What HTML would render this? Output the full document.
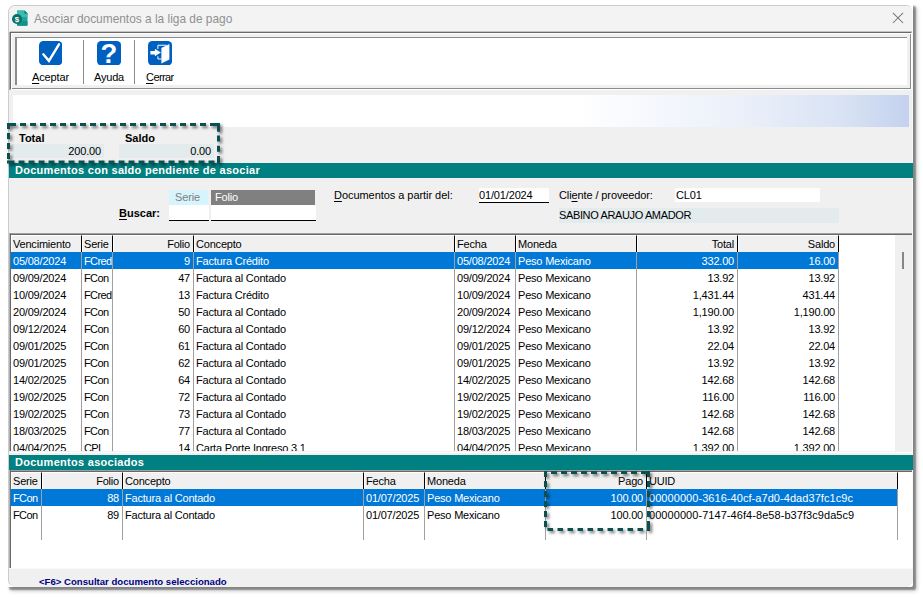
<!DOCTYPE html>
<html lang="es">
<head>
<meta charset="utf-8">
<title>Asociar documentos a la liga de pago</title>
<style>
*{box-sizing:border-box;margin:0;padding:0}
html,body{width:923px;height:597px;overflow:hidden;background:#fff}
body{font-family:"Liberation Sans",sans-serif;font-size:11px;color:#000;position:relative;letter-spacing:-0.15px}
.abs{position:absolute}
#shadow{position:absolute;left:6px;top:3px;width:907px;height:584px;border-radius:2px;box-shadow:3px 3px 1.5px rgba(0,0,0,.36),4px 4px 4px rgba(0,0,0,.2)}
#win{position:absolute;left:8px;top:5px;width:905px;height:582px;background:#f0f0f0;border:1px solid #c9cdd2;border-right-color:#f8f8f8;border-bottom-color:#f0f0f0;border-radius:7px;overflow:hidden}
#clip{position:absolute;left:0;top:0;width:923px;height:597px;clip-path:inset(6px 10px 11px 9px round 6px)}
#tbar{position:absolute;left:9px;top:6px;width:903px;height:26px;background:#f3f3f3}
#title{letter-spacing:0;position:absolute;left:34px;top:11px;font-size:11.9px;color:#909090;white-space:nowrap;line-height:16px}
u{text-decoration:underline;text-underline-offset:1.5px;text-decoration-thickness:1px}
.tb{position:absolute;top:71px;font-size:11px;line-height:13px;white-space:nowrap}
.bar{position:absolute;left:9px;width:904px;height:15px;background:#008080;color:#fff;font-weight:bold;font-size:11px;line-height:15px;padding-left:6px;white-space:nowrap;letter-spacing:.28px}
.lbl{position:absolute;white-space:nowrap;line-height:13px}
.b{font-weight:bold;letter-spacing:0}
.fld{position:absolute;background:#e3ebed;white-space:nowrap;line-height:14px;height:14px}
.grid{position:absolute;background:#fff;overflow:hidden;letter-spacing:-0.2px}
.hd{position:absolute;top:0;height:17px;background:#f0f0f0;border-right:1px solid #000;border-left:1px solid #fff;border-top:1px solid #fff;line-height:15px;padding:1px 3px 0 1px;white-space:nowrap;overflow:hidden}
.r{text-align:right}
.row{position:absolute;left:0;height:17px;line-height:17px;white-space:nowrap}
.row span{position:absolute;top:0;height:17px;padding:1px 3px 0 2px;overflow:hidden}
.sel{color:#fff}
.sel i{position:absolute;left:0;top:0;height:17px;background:#0078d7}
.dash{filter:drop-shadow(2px 2px 1.5px rgba(0,0,0,.55))}
.vl{position:absolute;width:1px;background:#a0a0a0;z-index:2}
</style>
</head>
<body>
<div id="shadow"></div>
<div id="win"></div>
<div id="clip">
<div id="tbar"></div>

<!-- title bar -->
<svg class="abs" style="left:11px;top:9px" width="18" height="18" viewBox="0 0 18 18">
  <path d="M6 1.5h7.5l3 3v11.5a.8.8 0 0 1-.8.8H6.800a.8.8 0 0 1-.8-.8z" fill="#19a59a"/>
  <path d="M6 1.500h7.500l3 3V8H6z" fill="#3bbcb0"/>
  <path d="M6 12h10.500v4a.8.8 0 0 1-.8.8H6.800a.8.8 0 0 1-.8-.8z" fill="#0f9488"/>
  <path d="M13.500 1.500l3 3h-3z" fill="#0b6f69"/>
  <circle cx="6" cy="10" r="5" fill="#0b6f69"/>
  <text x="6" y="13" font-family="Liberation Sans,sans-serif" font-size="8" font-weight="bold" fill="#fff" text-anchor="middle">$</text>
</svg>
<div id="title">Asociar documentos a la liga de pago</div>
<svg class="abs" style="left:892px;top:12px" width="12" height="12" viewBox="0 0 12 12"><path d="M.9 .8L11.100 11M11.100 .8L.9 11" stroke="#767676" stroke-width="1.050" fill="none"/></svg>

<!-- toolbar -->
<div class="abs" style="left:10px;top:32px;width:902px;height:58px;border-top:1px solid #696969;border-left:1px solid #696969;border-right:1px solid #fff;border-bottom:1px solid #fff;background:#f0f0f0;box-shadow:inset 1px 1px 0 #fff,inset -1px -1px 0 #8c8c8c,-1px 0 0 #a8a8a8,0 -1px 0 #c4c4c4"></div>
<div class="abs" style="left:15px;top:37px;width:892px;height:48px;border-top:1px solid #8c8c8c;border-left:2px solid #8c8c8c;background:#fff"></div>
<div class="abs" style="left:83px;top:40px;width:1px;height:44px;background:#8c8c8c"></div>
<div class="abs" style="left:134px;top:40px;width:1px;height:44px;background:#8c8c8c"></div>

<svg class="abs" style="left:38.800px;top:40.900px" width="23.400" height="24.300" viewBox="0 0 23.400 24.300"><rect width="23.400" height="24.300" rx="4.300" fill="#0060c0"/><path d="M4.300 13.300L9.900 19.900L20 3.300" stroke="#fff" stroke-width="2.400" fill="none" stroke-linecap="round" stroke-linejoin="miter"/></svg>
<svg class="abs" style="left:96.800px;top:40.900px" width="24.100" height="24.400" viewBox="0 0 24.100 24.400"><rect width="24.100" height="24.400" rx="4.300" fill="#0060c0"/><text x="11.900" y="22.200" font-family="Liberation Sans,sans-serif" font-size="27.500" font-weight="bold" fill="#fff" text-anchor="middle">?</text></svg>
<svg class="abs" style="left:147.800px;top:40.900px" width="24.100" height="24.400" viewBox="0 0 24.100 24.400"><rect width="24.100" height="24.400" rx="4.300" fill="#0060c0"/><path d="M13.400 7L21.400 2.950V18.500L13.400 22.500z" fill="#fff"/><path d="M9.900 8V4.250H18.500M9.900 15.300V18H13.400" stroke="#fff" stroke-width="1" fill="none"/><path d="M2.400 9.900H6.900V7.800L12.900 11.600L6.900 15.200V13.400H2.400z" fill="#fff"/></svg>

<div class="tb" style="left:32px;letter-spacing:-.13px"><u>A</u>ceptar</div>
<div class="tb" style="left:94px;letter-spacing:-.2px">Ayuda</div>
<div class="tb" style="left:146px;letter-spacing:-.58px"><u>C</u>errar</div>

<!-- gradient band -->
<div class="abs" style="left:13px;top:95px;width:896px;height:32px;background:linear-gradient(90deg,#fff 0%,#fff 63%,#f2f5fc 74.800%,#e8eef9 83.400%,#d9e3f4 92.300%,#c4d2ee 100%)"></div>

<!-- totals -->
<div class="lbl b" style="left:19px;top:132px">Total</div>
<div class="lbl b" style="left:125px;top:132px">Saldo</div>
<div class="fld r" style="left:12px;top:144px;width:92px;padding-right:3px">200.00</div>
<div class="fld r" style="left:119px;top:144px;width:95px;padding-right:3px">0.00</div>

<div class="bar" style="top:163px">Documentos con saldo pendiente de asociar</div>

<!-- dashed highlight 1 -->

<!-- search -->
<div class="abs" style="left:169px;top:190px;width:39px;height:15px;background:#d6f4fb;color:#808080;line-height:15px;padding-left:6px">Serie</div>
<div class="abs" style="left:211px;top:190px;width:104px;height:15px;background:#808080;color:#fff;line-height:15px;padding-left:4px">Folio</div>
<div class="lbl b" style="left:119px;top:207px"><u>B</u>uscar:</div>
<div class="abs" style="left:169px;top:205px;width:40px;height:16px;background:#fff;border-bottom:1px solid #000"></div>
<div class="abs" style="left:211px;top:205px;width:105px;height:16px;background:#fff;border-bottom:1px solid #000"></div>

<div class="lbl" style="left:334px;top:189px;letter-spacing:-.05px"><u>D</u>ocumentos a partir del:</div>
<div class="abs" style="left:479px;top:188px;width:70px;height:15px;background:#fff;border-bottom:1px solid #000;line-height:15px;padding-left:0">01/01/2024</div>
<div class="lbl" style="left:559px;top:189px;letter-spacing:-.11px">Cli<u>e</u>nte / proveedor:</div>
<div class="abs" style="left:675px;top:188px;width:145px;height:14px;background:#fff;line-height:15px;padding-left:1px">CL01</div>
<div class="fld" style="left:559px;top:208px;width:280px;height:15px;line-height:15px;letter-spacing:-.37px">SABINO ARAUJO AMADOR</div>

<!-- grid 1 -->
<div class="abs" style="left:10px;top:233px;width:902px;height:218px;border-top:1px solid #a0a0a0;border-left:1px solid #696969;background:#fff;box-shadow:inset 0 1px 0 #696969,-1px 0 0 #b0b0b0"></div>
<div class="grid" id="g1" style="left:11px;top:235px;width:884px;height:216px">
  <div class="hd" style="left:0px;width:71px">Vencimiento</div>
  <div class="hd" style="left:71px;width:31px">Serie</div>
  <div class="hd r" style="left:102px;width:81px">Folio</div>
  <div class="hd" style="left:183px;width:261px">Concepto</div>
  <div class="hd" style="left:444px;width:61px">Fecha</div>
  <div class="hd" style="left:505px;width:121px">Moneda</div>
  <div class="hd r" style="left:626px;width:101px">Total</div>
  <div class="hd r" style="left:727px;width:101px">Saldo</div>
<!--R1-->
  <div class="vl" style="left:70px;top:17px;height:201px"></div>
  <div class="vl" style="left:101px;top:17px;height:201px"></div>
  <div class="vl" style="left:182px;top:17px;height:201px"></div>
  <div class="vl" style="left:443px;top:17px;height:201px"></div>
  <div class="vl" style="left:504px;top:17px;height:201px"></div>
  <div class="vl" style="left:625px;top:17px;height:201px"></div>
  <div class="vl" style="left:726px;top:17px;height:201px"></div>
  <div class="vl" style="left:827px;top:17px;height:201px"></div>
  <div class="row sel" style="top:17px"><i style="width:828px"></i><span style="left:0px;width:70px">05/08/2024</span><span style="left:71px;width:30px;letter-spacing:-.6px">FCred</span><span class=r style="left:102px;width:80px">9</span><span style="left:183px;width:260px">Factura Crédito</span><span style="left:444px;width:60px">05/08/2024</span><span style="left:505px;width:120px">Peso Mexicano</span><span class=r style="left:626px;width:100px">332.00</span><span class=r style="left:727px;width:100px">16.00</span></div>
  <div class="row" style="top:34px"><span style="left:0px;width:70px">09/09/2024</span><span style="left:71px;width:30px;letter-spacing:-.6px">FCon</span><span class=r style="left:102px;width:80px">47</span><span style="left:183px;width:260px">Factura al Contado</span><span style="left:444px;width:60px">09/09/2024</span><span style="left:505px;width:120px">Peso Mexicano</span><span class=r style="left:626px;width:100px">13.92</span><span class=r style="left:727px;width:100px">13.92</span></div>
  <div class="row" style="top:51px"><span style="left:0px;width:70px">10/09/2024</span><span style="left:71px;width:30px;letter-spacing:-.6px">FCred</span><span class=r style="left:102px;width:80px">13</span><span style="left:183px;width:260px">Factura Crédito</span><span style="left:444px;width:60px">10/09/2024</span><span style="left:505px;width:120px">Peso Mexicano</span><span class=r style="left:626px;width:100px">1,431.44</span><span class=r style="left:727px;width:100px">431.44</span></div>
  <div class="row" style="top:68px"><span style="left:0px;width:70px">20/09/2024</span><span style="left:71px;width:30px;letter-spacing:-.6px">FCon</span><span class=r style="left:102px;width:80px">50</span><span style="left:183px;width:260px">Factura al Contado</span><span style="left:444px;width:60px">20/09/2024</span><span style="left:505px;width:120px">Peso Mexicano</span><span class=r style="left:626px;width:100px">1,190.00</span><span class=r style="left:727px;width:100px">1,190.00</span></div>
  <div class="row" style="top:85px"><span style="left:0px;width:70px">09/12/2024</span><span style="left:71px;width:30px;letter-spacing:-.6px">FCon</span><span class=r style="left:102px;width:80px">60</span><span style="left:183px;width:260px">Factura al Contado</span><span style="left:444px;width:60px">09/12/2024</span><span style="left:505px;width:120px">Peso Mexicano</span><span class=r style="left:626px;width:100px">13.92</span><span class=r style="left:727px;width:100px">13.92</span></div>
  <div class="row" style="top:102px"><span style="left:0px;width:70px">09/01/2025</span><span style="left:71px;width:30px;letter-spacing:-.6px">FCon</span><span class=r style="left:102px;width:80px">61</span><span style="left:183px;width:260px">Factura al Contado</span><span style="left:444px;width:60px">09/01/2025</span><span style="left:505px;width:120px">Peso Mexicano</span><span class=r style="left:626px;width:100px">22.04</span><span class=r style="left:727px;width:100px">22.04</span></div>
  <div class="row" style="top:119px"><span style="left:0px;width:70px">09/01/2025</span><span style="left:71px;width:30px;letter-spacing:-.6px">FCon</span><span class=r style="left:102px;width:80px">62</span><span style="left:183px;width:260px">Factura al Contado</span><span style="left:444px;width:60px">09/01/2025</span><span style="left:505px;width:120px">Peso Mexicano</span><span class=r style="left:626px;width:100px">13.92</span><span class=r style="left:727px;width:100px">13.92</span></div>
  <div class="row" style="top:136px"><span style="left:0px;width:70px">14/02/2025</span><span style="left:71px;width:30px;letter-spacing:-.6px">FCon</span><span class=r style="left:102px;width:80px">64</span><span style="left:183px;width:260px">Factura al Contado</span><span style="left:444px;width:60px">14/02/2025</span><span style="left:505px;width:120px">Peso Mexicano</span><span class=r style="left:626px;width:100px">142.68</span><span class=r style="left:727px;width:100px">142.68</span></div>
  <div class="row" style="top:153px"><span style="left:0px;width:70px">19/02/2025</span><span style="left:71px;width:30px;letter-spacing:-.6px">FCon</span><span class=r style="left:102px;width:80px">72</span><span style="left:183px;width:260px">Factura al Contado</span><span style="left:444px;width:60px">19/02/2025</span><span style="left:505px;width:120px">Peso Mexicano</span><span class=r style="left:626px;width:100px">116.00</span><span class=r style="left:727px;width:100px">116.00</span></div>
  <div class="row" style="top:170px"><span style="left:0px;width:70px">19/02/2025</span><span style="left:71px;width:30px;letter-spacing:-.6px">FCon</span><span class=r style="left:102px;width:80px">73</span><span style="left:183px;width:260px">Factura al Contado</span><span style="left:444px;width:60px">19/02/2025</span><span style="left:505px;width:120px">Peso Mexicano</span><span class=r style="left:626px;width:100px">142.68</span><span class=r style="left:727px;width:100px">142.68</span></div>
  <div class="row" style="top:187px"><span style="left:0px;width:70px">18/03/2025</span><span style="left:71px;width:30px;letter-spacing:-.6px">FCon</span><span class=r style="left:102px;width:80px">77</span><span style="left:183px;width:260px">Factura al Contado</span><span style="left:444px;width:60px">18/03/2025</span><span style="left:505px;width:120px">Peso Mexicano</span><span class=r style="left:626px;width:100px">142.68</span><span class=r style="left:727px;width:100px">142.68</span></div>
  <div class="row" style="top:204px"><span style="left:0px;width:70px">04/04/2025</span><span style="left:71px;width:30px;letter-spacing:-.6px">CPI</span><span class=r style="left:102px;width:80px">14</span><span style="left:183px;width:260px">Carta Porte Ingreso 3.1</span><span style="left:444px;width:60px">04/04/2025</span><span style="left:505px;width:120px">Peso Mexicano</span><span class=r style="left:626px;width:100px">1,392.00</span><span class=r style="left:727px;width:100px">1,392.00</span></div>
<!--/R1-->
</div>
<div class="abs" style="left:895px;top:235px;width:17px;height:216px;background:#f0f0f0"></div>
<div class="abs" style="left:902px;top:252px;width:2px;height:17px;background:#868686"></div>

<div class="abs" style="left:10px;top:452px;width:902px;height:1px;background:#fff"></div>
<div class="bar" style="top:455px">Documentos asociados</div>

<!-- grid 2 -->
<div class="abs" style="left:10px;top:470px;width:902px;height:98px;border-top:1px solid #a0a0a0;border-left:1px solid #696969;background:#fff;box-shadow:inset 0 1px 0 #696969,-1px 0 0 #b0b0b0"></div>
<div class="grid" id="g2" style="left:11px;top:472px;width:900px;height:96px">
  <div class="hd" style="left:0px;width:31px">Serie</div>
  <div class="hd r" style="left:31px;width:81px">Folio</div>
  <div class="hd" style="left:112px;width:241px">Concepto</div>
  <div class="hd" style="left:353px;width:61px">Fecha</div>
  <div class="hd" style="left:414px;width:121px">Moneda</div>
  <div class="hd r" style="left:535px;width:101px">Pago</div>
  <div class="hd" style="left:636px;width:251px">UUID</div>
<!--R2-->
  <div class="vl" style="left:30px;top:17px;height:51px"></div>
  <div class="vl" style="left:111px;top:17px;height:51px"></div>
  <div class="vl" style="left:352px;top:17px;height:51px"></div>
  <div class="vl" style="left:413px;top:17px;height:51px"></div>
  <div class="vl" style="left:534px;top:17px;height:51px"></div>
  <div class="vl" style="left:635px;top:17px;height:51px"></div>
  <div class="vl" style="left:886px;top:17px;height:51px"></div>
  <div class="row sel" style="top:17px"><i style="width:887px"></i><span style="left:0px;width:30px;letter-spacing:-.6px">FCon</span><span class=r style="left:31px;width:80px">88</span><span style="left:112px;width:240px">Factura al Contado</span><span style="left:353px;width:60px">01/07/2025</span><span style="left:414px;width:120px">Peso Mexicano</span><span class=r style="left:535px;width:100px">100.00</span><span style="left:636px;width:250px;letter-spacing:.06px">00000000-3616-40cf-a7d0-4dad37fc1c9c</span></div>
  <div class="row" style="top:34px"><span style="left:0px;width:30px;letter-spacing:-.6px">FCon</span><span class=r style="left:31px;width:80px">89</span><span style="left:112px;width:240px">Factura al Contado</span><span style="left:353px;width:60px">01/07/2025</span><span style="left:414px;width:120px">Peso Mexicano</span><span class=r style="left:535px;width:100px">100.00</span><span style="left:636px;width:250px;letter-spacing:.06px">00000000-7147-46f4-8e58-b37f3c9da5c9</span></div>
<!--/R2-->
</div>

<!-- dashed highlight 2 -->

<!-- status -->
<div class="abs" style="left:9px;top:568px;width:904px;height:19px;background:#f0f0f0;border-top:1px solid #fafafa"></div>
<div class="lbl b" style="left:39px;top:576px;font-size:9.600px;color:#000080;line-height:12px;letter-spacing:0">&lt;F6&gt; Consultar documento seleccionado</div>

</div>
<svg class="abs dash" style="left:0;top:0" width="923" height="597" viewBox="0 0 923 597"><path d="M7 124.5H16M20 124.5H26M30 124.5H36M40 124.5H46M50 124.5H56M60 124.5H66M70 124.5H76M80 124.5H86M90 124.5H96M100 124.5H106M110 124.5H116M120 124.5H126M130 124.5H136M140 124.5H146M150 124.5H156M160 124.5H166M170 124.5H176M180 124.5H186M190 124.5H196M200 124.5H206M210 124.5H220M8.5 123V129M8.5 133V139M8.5 143V149M8.5 153V159M8.5 160.5V163.5M218.5 123V131.7M218.5 135.6V141.6M218.5 145.7V151.7M218.5 156V163.5M7 162H14.5M18.5 162H24.5M28.5 162H34.5M38.5 162H44.5M48.5 162H54.5M58.5 162H64.5M68.5 162H74.5M78.5 162H84.5M88.5 162H94.5M98.5 162H104.5M108.5 162H114.5M118.5 162H124.5M128.5 162H134.5M138.5 162H144.5M148.5 162H154.5M158.5 162H164.5M168.5 162H174.5M178.5 162H184.5M188.5 162H194.5M198.5 162H204.5M208.5 162H214.5M217 162H220M544 472.5H547M551 472.5H557M561 472.5H567M571 472.5H577M581 472.5H587M591 472.5H597M601 472.5H607M611 472.5H617M621 472.5H627M631 472.5H637M641 472.5H650M545.5 471V477M545.5 481V487M545.5 491V497M545.5 501V507M545.5 511V517M545.5 521V527M648.5 471V477M648.5 481V487M648.5 491V497M648.5 501V507M648.5 511V517M648.5 521V531M547.5 529.5H553M557.5 529.5H563M567.5 529.5H573M577.5 529.5H583M587.5 529.5H593M597.5 529.5H603M607.5 529.5H613M617.5 529.5H623M627.5 529.5H633M637.5 529.5H643" stroke="#0b5050" stroke-width="3" fill="none"/></svg>
</body>
</html>
